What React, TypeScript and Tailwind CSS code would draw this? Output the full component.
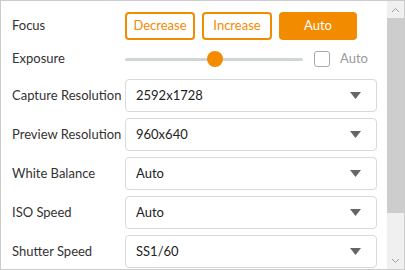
import { ReactNode } from "react";

const ORANGE = "#f38b00";

const Row = ({ label, children, className }: { label: string; children: ReactNode; className: string }) => (
  <div className={`flex items-center ${className}`}>
    <div className="w-[113px] shrink-0 text-[13px] text-[#333]">{label}</div>
    {children}
  </div>
);

const Select = ({ value }: { value: string }) => (
  <div className="flex h-full w-[252px] items-center justify-between rounded-[4px] border border-[#d9d9d9] bg-white pl-[10px] pr-[15px] text-[13px] text-[#222]">
    <span>{value}</span>
    <svg width="11" height="7" viewBox="0 0 11 7">
      <path d="M0 0 H11 L5.5 7 Z" fill="#666" />
    </svg>
  </div>
);

const SELECTS = [
  { label: "Capture Resolution", value: "2592x1728" },
  { label: "Preview Resolution", value: "960x640" },
  { label: "White Balance", value: "Auto" },
  { label: "ISO Speed", value: "Auto" },
  { label: "Shutter Speed", value: "SS1/60" },
];

export default function App() {
  return (
    <div
      className="flex h-[270px] w-[405px] overflow-hidden border border-[#cccccc] bg-white"
      style={{ fontFamily: "Lato, 'Open Sans', sans-serif" }}
    >
      <div className="flex-1 overflow-hidden pl-[11px] pt-[11px]">
        <Row label="Focus" className="h-[28px]">
          <div className="flex h-full gap-[7px] text-[13px]">
            <button className="h-full w-[70px] rounded-[4px] border-2 border-[#f38b00] text-[#f38b00]">Decrease</button>
            <button className="h-full w-[70px] rounded-[4px] border-2 border-[#f38b00] text-[#f38b00]">Increase</button>
            <button className="h-full w-[78px] rounded-[4px] bg-[#f38b00] text-white">Auto</button>
          </div>
        </Row>
        <Row label="Exposure" className="mt-[6px] h-[26px]">
          <div className="relative flex h-full w-[178px] items-center">
            <div className="h-[3px] w-full rounded-full bg-[#d0d5d7]" />
            <div
              className="absolute top-1/2 h-[16px] w-[16px] -translate-x-1/2 -translate-y-1/2 rounded-full"
              style={{ left: "50.6%", backgroundColor: ORANGE }}
            />
          </div>
          <div className="ml-[11px] h-[16px] w-[16px] rounded-[3px] border border-[#aaaaaa] bg-white" />
          <span className="ml-[10px] text-[13px] text-[#999]">Auto</span>
        </Row>
        {SELECTS.map((s, i) => (
          <Row key={s.label} label={s.label} className={`h-[33px] ${i === 0 ? "mt-[7px]" : "mt-[6px]"}`}>
            <Select value={s.value} />
          </Row>
        ))}
      </div>
      <div className="flex w-[17px] shrink-0 flex-col bg-[#f0f0f0]">
        <div className="flex h-[17px] items-center justify-center">
          <svg width="9" height="6" viewBox="0 0 9 6">
            <path d="M1 5 L4.5 1.5 L8 5" stroke="#a0a0a0" strokeWidth="1" fill="none" />
          </svg>
        </div>
        <div className="h-[195px] bg-[#cdcdcd]" />
        <div className="flex-1" />
        <div className="flex h-[17px] items-center justify-center">
          <svg width="9" height="6" viewBox="0 0 9 6">
            <path d="M1 1 L4.5 4.5 L8 1" stroke="#a0a0a0" strokeWidth="1" fill="none" />
          </svg>
        </div>
      </div>
    </div>
  );
}
